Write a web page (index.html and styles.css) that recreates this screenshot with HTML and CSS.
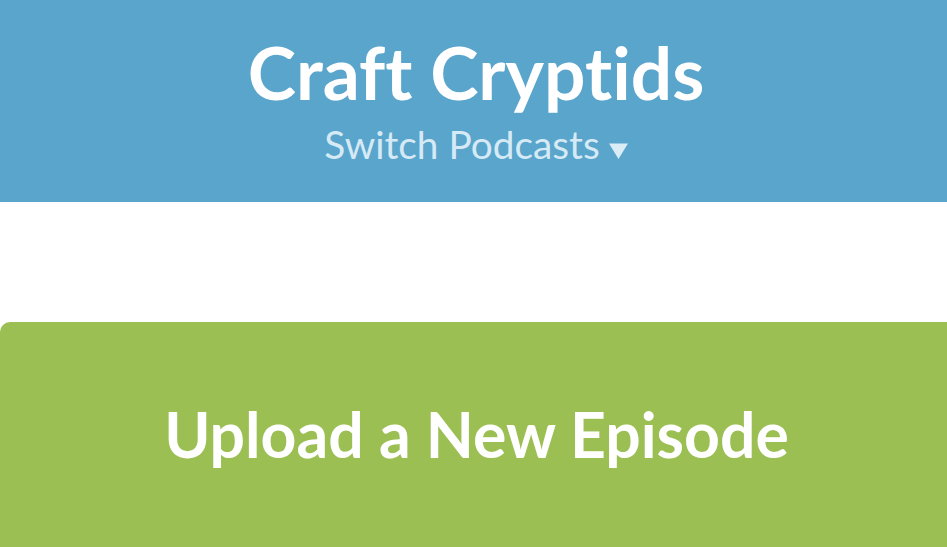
FILE: index.html
```html
<!DOCTYPE html>
<html>
<head>
<meta charset="utf-8">
<link rel="stylesheet" href="styles.css">
</head>
<body>
<header class="header">
  <h1 class="title">Craft Cryptids</h1>
  <div class="switch">Switch Podcasts<svg class="caret" width="19" height="16" viewBox="0 0 19 16"><polygon points="0,0.5 19,0.5 9.5,16" fill="#daecf6"/></svg></div>
</header>
<main class="main">
  <a class="upload" href="#">Upload a New Episode</a>
</main>
</body>
</html>
```
FILE: styles.css
```css
html, body {
  margin: 0;
  padding: 0;
  background: #ffffff;
  font-family: Lato, "Open Sans", sans-serif;
  font-variant-ligatures: none;
}
.header {
  background: #5aa5cc;
  height: 202px;
  box-sizing: border-box;
  padding: 28px 0 0 5px;
  display: flex;
  flex-direction: column;
  align-items: center;
}
.title {
  margin: 0;
  color: #ffffff;
  font-weight: 700;
  font-size: 73px;
  line-height: normal;
}
.switch {
  margin-top: 5px;
  color: #d6eaf5;
  font-size: 38.8px;
  line-height: normal;
  font-weight: 400;
  display: flex;
  align-items: baseline;
}
.caret {
  margin-left: 9px;
}
.main {
  padding-top: 120px;
  overflow: hidden;
}
.upload {
  display: block;
  width: calc(100% + 20px);
  height: 240px;
  box-sizing: border-box;
  padding: 74px 14px 0 0;
  background: #9bbf53;
  border-radius: 10px;
  color: #ffffff;
  text-decoration: none;
  text-align: center;
  font-weight: 700;
  font-size: 62.5px;
  line-height: normal;
}
```
